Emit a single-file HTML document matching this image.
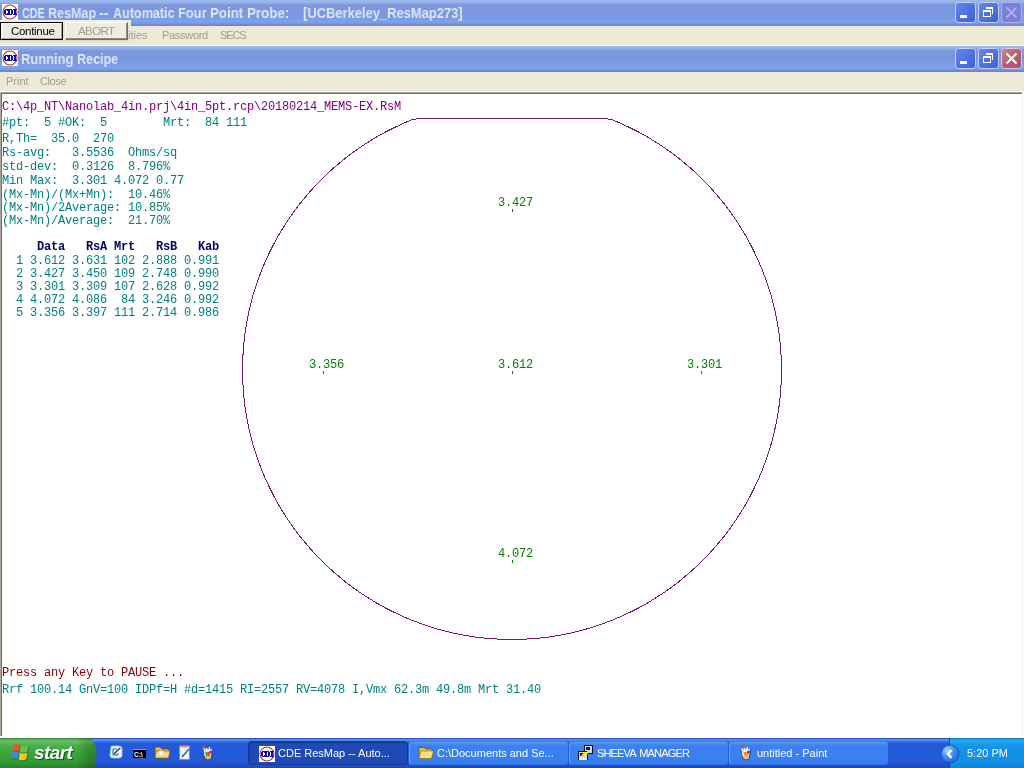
<!DOCTYPE html>
<html><head><meta charset="utf-8">
<style>
*{margin:0;padding:0;box-sizing:border-box}
html,body{width:1024px;height:768px;overflow:hidden;background:#fff;position:relative;font-family:"Liberation Sans",sans-serif}
.abs{position:absolute}
.tbar{position:absolute;left:0;width:1024px;height:26px;background:linear-gradient(to bottom,#9db6ec 0px,#9ab3ea 2px,#7b98de 5px,#7a96df 12px,#7b9be2 18px,#79a6e8 22px,#7c8fdd 24px,#6f7fd6 25px,#6f7fd6 26px)}
.ttl{position:absolute;will-change:transform;transform-origin:0 0;font-weight:bold;font-size:14px;color:#dce6f8;white-space:pre;line-height:14px}
.ico{position:absolute;width:16px;height:16px;background:#fff}
.menu{position:absolute;left:0;width:1024px;background:#ece9d8}
.mi{position:absolute;will-change:transform;font-size:11px;color:#a29e8e;white-space:pre;line-height:11px}
.mono{position:absolute;will-change:transform;font-family:"Liberation Mono",monospace;font-size:12px;letter-spacing:-0.2px;white-space:pre;line-height:12px}
.tbt{position:absolute;will-change:transform;top:747px;font-size:11px;line-height:13px;color:#fff;white-space:pre}
.btn{position:absolute;width:21px;height:21px;border-radius:3px;border:1px solid #cfdcf8}
</style></head><body>
<!-- main title bar -->
<div class="tbar" style="top:0"></div>
<svg class="abs" style="left:2px;top:4px" width="16" height="16"><rect width="16" height="16" fill="#fff"/><circle cx="8" cy="8" r="7" fill="none" stroke="#b83030" stroke-width="1.1"/><path fill="#0808b0" d="M2,6h2v4h-2zM3,5h3v1h-3zM3,10h3v1h-3zM5,5h1v2h-1zM5,9h1v2h-1zM6,5h2v6h-2zM8,5h2v1h-2zM8,10h2v1h-2zM9,6h2v4h-2zM11,5h4v1h-4zM11,10h4v1h-4zM12,6h2v4h-2z"/></svg>
<div class="ttl" style="left:22.00px;top:6px;transform:scaleX(0.7679)">CDE</div>
<div class="ttl" style="left:47.70px;top:6px;transform:scaleX(0.8961)">ResMap</div>
<div class="ttl" style="left:99.30px;top:6px;transform:scaleX(1.0375)">--</div>
<div class="ttl" style="left:113.30px;top:6px;transform:scaleX(0.9000)">Automatic</div>
<div class="ttl" style="left:178.08px;top:6px;transform:scaleX(0.9172)">Four</div>
<div class="ttl" style="left:210.05px;top:6px;transform:scaleX(0.9485)">Point</div>
<div class="ttl" style="left:246.85px;top:6px;transform:scaleX(0.9537)">Probe:</div>
<div class="ttl" style="left:303.48px;top:6px;transform:scaleX(0.9241)">[UCBerkeley_ResMap273]</div>
<svg class="abs" style="left:955px;top:2px" width="21" height="21"><defs><linearGradient id="bg2" x1="0" y1="0" x2="1" y2="1"><stop offset="0" stop-color="#6688ea"/><stop offset="1" stop-color="#3c5ed6"/></linearGradient></defs><rect x="0.5" y="0.5" width="20" height="20" rx="3" fill="url(#bg2)" stroke="#c3d3f8"/><rect x="5" y="13" width="7" height="3" fill="#fff"/></svg>
<svg class="abs" style="left:978px;top:2px" width="21" height="21"><rect x="0.5" y="0.5" width="20" height="20" rx="3" fill="url(#bg2)" stroke="#c3d3f8"/><path d="M8.5,6.5 H14.5 V11.5 M8,5.5 H15" stroke="#fff" fill="none" stroke-width="1"/><rect x="8" y="5" width="7" height="2" fill="#fff"/><rect x="14" y="5" width="1" height="7" fill="#fff"/><rect x="5" y="8" width="8" height="2" fill="#fff"/><rect x="5" y="8" width="1" height="7" fill="#fff"/><rect x="12" y="8" width="1" height="7" fill="#fff"/><rect x="5" y="14" width="8" height="1" fill="#fff"/></svg>
<svg class="abs" style="left:1001px;top:2px" width="21" height="21"><rect x="0.5" y="0.5" width="20" height="20" rx="3" fill="#7d80d6" stroke="#a9b4ee"/><path d="M5.5,5.5 L15.5,15.5 M15.5,5.5 L5.5,15.5" stroke="#b9bbf0" stroke-width="1.5"/></svg>
<!-- main menu -->
<div class="menu" style="top:26px;height:19px"></div>
<div class="abs" style="left:0;top:45px;width:1024px;height:1px;background:#fff"></div>
<div class="mi" style="left:162px;top:30px;letter-spacing:-0.3px">Password</div>
<div class="mi" style="left:220px;top:30px;letter-spacing:-1.1px">SECS</div>
<!-- button panel -->
<div class="abs" style="left:0;top:20px;width:131px;height:25px;background:#ebe8dc"></div>
<div class="abs" style="left:0;top:40px;width:129px;height:2px;background:#dedcd6"></div>
<div class="abs" style="left:0;top:20px;width:131px;height:2px;background:#eef0e6"></div>
<div class="abs" style="left:0;top:22px;width:63px;height:18px;border:1px solid #000;background:#efece0;box-shadow:inset 1px 1px #fff,inset -1px -1px #aca899"></div>
<div class="abs" style="left:65px;top:22px;width:63px;height:18px;background:#efece0;border-right:1px solid #716f64;border-bottom:1px solid #716f64;border-top:1px solid #fff;border-left:1px solid #fff;box-shadow:inset -1px -1px #8f8c80"></div>
<div class="mi" style="left:11px;top:26px;color:#000;font-size:11.5px;letter-spacing:-0.3px">Continue</div>
<div class="mi" style="left:78px;top:26px;font-size:11.5px;letter-spacing:-0.6px">ABORT</div>
<div class="mi" style="left:128px;top:30px">ities</div>
<!-- child title -->
<div class="tbar" style="top:46px"></div>
<svg class="abs" style="left:2px;top:50px" width="16" height="16"><rect width="16" height="16" fill="#fff"/><circle cx="8" cy="8" r="7" fill="none" stroke="#b83030" stroke-width="1.1"/><path fill="#0808b0" d="M2,6h2v4h-2zM3,5h3v1h-3zM3,10h3v1h-3zM5,5h1v2h-1zM5,9h1v2h-1zM6,5h2v6h-2zM8,5h2v1h-2zM8,10h2v1h-2zM9,6h2v4h-2zM11,5h4v1h-4zM11,10h4v1h-4zM12,6h2v4h-2z"/></svg>
<div class="ttl" style="left:21.08px;top:52px;transform:scaleX(0.9222)">Running</div>
<div class="ttl" style="left:76.70px;top:52px;transform:scaleX(0.9000)">Recipe</div>
<svg class="abs" style="left:955px;top:48px" width="21" height="21"><defs><linearGradient id="bg48" x1="0" y1="0" x2="1" y2="1"><stop offset="0" stop-color="#6688ea"/><stop offset="1" stop-color="#3c5ed6"/></linearGradient></defs><rect x="0.5" y="0.5" width="20" height="20" rx="3" fill="url(#bg48)" stroke="#c3d3f8"/><rect x="5" y="13" width="7" height="3" fill="#fff"/></svg>
<svg class="abs" style="left:978px;top:48px" width="21" height="21"><rect x="0.5" y="0.5" width="20" height="20" rx="3" fill="url(#bg48)" stroke="#c3d3f8"/><path d="M8.5,6.5 H14.5 V11.5 M8,5.5 H15" stroke="#fff" fill="none" stroke-width="1"/><rect x="8" y="5" width="7" height="2" fill="#fff"/><rect x="14" y="5" width="1" height="7" fill="#fff"/><rect x="5" y="8" width="8" height="2" fill="#fff"/><rect x="5" y="8" width="1" height="7" fill="#fff"/><rect x="12" y="8" width="1" height="7" fill="#fff"/><rect x="5" y="14" width="8" height="1" fill="#fff"/></svg>
<svg class="abs" style="left:1001px;top:48px" width="21" height="21"><defs><linearGradient id="rg" x1="0" y1="0" x2="1" y2="1"><stop offset="0" stop-color="#c88a8e"/><stop offset="0.5" stop-color="#b8606e"/><stop offset="1" stop-color="#a84e68"/></linearGradient></defs><rect x="0.5" y="0.5" width="20" height="20" rx="3" fill="url(#rg)" stroke="#d6c6f0"/><path d="M5.5,5.5 L15.5,15.5 M15.5,5.5 L5.5,15.5" stroke="#fff" stroke-width="2"/></svg>
<!-- child menu -->
<div class="menu" style="top:72px;height:19px"></div>
<div class="abs" style="left:0;top:91px;width:1024px;height:1px;background:#fff"></div>
<div class="mi" style="left:6px;top:76px">Print</div>
<div class="mi" style="left:40px;top:76px;letter-spacing:-0.4px">Close</div>
<!-- text area border -->
<div class="abs" style="left:0;top:92px;width:1022px;height:1px;background:#aca899"></div>
<div class="abs" style="left:1px;top:93px;width:1021px;height:1px;background:#716f64"></div>
<div class="abs" style="left:0;top:92px;width:1px;height:644px;background:#aca899"></div>
<div class="abs" style="left:1px;top:93px;width:1px;height:643px;background:#716f64"></div>
<div class="abs" style="left:1022px;top:94px;width:1px;height:642px;background:#efeee8"></div>
<svg class="abs" style="left:0;top:0" width="1024" height="738">
<polyline points="781.5,370.0 781.3,379.4 780.8,388.8 780.0,398.2 778.9,407.5 777.4,416.8 775.6,426.0 773.5,435.2 771.1,444.3 768.3,453.3 765.2,462.2 761.9,471.0 758.2,479.6 754.2,488.1 750.0,496.5 745.4,504.8 740.5,512.8 735.4,520.7 730.0,528.4 724.4,535.9 718.4,543.2 712.3,550.3 705.9,557.2 699.2,563.9 692.3,570.3 685.2,576.4 677.9,582.4 670.4,588.0 662.7,593.4 654.8,598.5 646.8,603.4 638.5,608.0 630.1,612.2 621.6,616.2 613.0,619.9 604.2,623.2 595.3,626.3 586.3,629.1 577.2,631.5 568.0,633.6 558.8,635.4 549.5,636.9 540.2,638.0 530.8,638.8 521.4,639.3 512.0,639.5 502.6,639.3 493.2,638.8 483.8,638.0 474.5,636.9 465.2,635.4 456.0,633.6 446.8,631.5 437.7,629.1 428.7,626.3 419.8,623.2 411.0,619.9 402.4,616.2 393.9,612.2 385.5,608.0 377.3,603.4 369.2,598.5 361.3,593.4 353.6,588.0 346.1,582.4 338.8,576.4 331.7,570.3 324.8,563.9 318.1,557.2 311.7,550.3 305.6,543.2 299.6,535.9 294.0,528.4 288.6,520.7 283.5,512.8 278.6,504.8 274.0,496.5 269.8,488.1 265.8,479.6 262.1,471.0 258.8,462.2 255.7,453.3 252.9,444.3 250.5,435.2 248.4,426.0 246.6,416.8 245.1,407.5 244.0,398.2 243.2,388.8 242.7,379.4 242.5,370.0 242.7,360.6 243.2,351.2 244.0,341.8 245.1,332.5 246.6,323.2 248.4,314.0 250.5,304.8 252.9,295.7 255.7,286.7 258.8,277.8 262.1,269.0 265.8,260.4 269.8,251.9 274.0,243.5 278.6,235.2 283.5,227.2 288.6,219.3 294.0,211.6 299.6,204.1 305.6,196.8 311.7,189.7 318.1,182.8 324.8,176.1 331.7,169.7 338.8,163.6 346.1,157.6 353.6,152.0 361.3,146.6 369.2,141.5 377.2,136.6 385.5,132.0 393.9,127.8 402.4,123.8 411.0,120.1 419.8,118 428.7,118 437.7,118 446.8,118 456.0,118 465.2,118 474.5,118 483.8,118 493.2,118 502.6,118 512.0,118 521.4,118 530.8,118 540.2,118 549.5,118 558.8,118 568.0,118 577.2,118 586.3,118 595.3,118 604.2,118 613.0,120.1 621.6,123.8 630.1,127.8 638.5,132.0 646.8,136.6 654.8,141.5 662.7,146.6 670.4,152.0 677.9,157.6 685.2,163.6 692.3,169.7 699.2,176.1 705.9,182.8 712.3,189.7 718.4,196.8 724.4,204.1 730.0,211.6 735.4,219.3 740.5,227.2 745.4,235.2 750.0,243.5 754.2,251.9 758.2,260.4 761.9,269.0 765.2,277.8 768.3,286.7 771.1,295.7 773.5,304.8 775.6,314.0 777.4,323.2 778.9,332.5 780.0,341.8 780.8,351.2 781.3,360.6 781.5,370.0" fill="none" stroke="#701a70" stroke-width="1" shape-rendering="crispEdges"/>
</svg>
<!-- text -->
<div class="mono" style="left:2px;top:101px;color:#800080">C:\4p_NT\Nanolab_4in.prj\4in_5pt.rcp\20180214_MEMS-EX.RsM</div>
<div class="mono" style="left:2px;top:117px;color:#008080">#pt:  5 #OK:  5        Mrt:  84 111</div>
<div class="mono" style="left:2px;top:133px;color:#008080">R,Th=  35.0  270</div>
<div class="mono" style="left:2px;top:147px;color:#008080">Rs-avg:   3.5536  Ohms/sq</div>
<div class="mono" style="left:2px;top:161px;color:#008080">std-dev:  0.3126  8.796%</div>
<div class="mono" style="left:2px;top:175px;color:#008080">Min Max:  3.301 4.072 0.77</div>
<div class="mono" style="left:2px;top:189px;color:#008080">(Mx-Mn)/(Mx+Mn):  10.46%</div>
<div class="mono" style="left:2px;top:202px;color:#008080">(Mx-Mn)/2Average: 10.85%</div>
<div class="mono" style="left:2px;top:215px;color:#008080">(Mx-Mn)/Average:  21.70%</div>
<div class="mono" style="left:2px;top:241px;color:#000060;font-weight:bold">     Data   RsA Mrt   RsB   Kab</div>
<div class="mono" style="left:2px;top:255px;color:#008080">  1 3.612 3.631 102 2.888 0.991</div>
<div class="mono" style="left:2px;top:268px;color:#008080">  2 3.427 3.450 109 2.748 0.990</div>
<div class="mono" style="left:2px;top:281px;color:#008080">  3 3.301 3.309 107 2.628 0.992</div>
<div class="mono" style="left:2px;top:294px;color:#008080">  4 4.072 4.086  84 3.246 0.992</div>
<div class="mono" style="left:2px;top:307px;color:#008080">  5 3.356 3.397 111 2.714 0.986</div>
<div class="mono" style="left:2px;top:667px;color:#800000">Press any Key to PAUSE ...</div>
<div class="mono" style="left:2px;top:684px;color:#008080">Rrf 100.14 GnV=100 IDPf=H #d=1415 RI=2557 RV=4078 I,Vmx 62.3m 49.8m Mrt 31.40</div>
<div class="mono" style="left:498px;top:197px;color:#008000">3.427</div>
<div class="mono" style="left:309px;top:359px;color:#008000">3.356</div>
<div class="mono" style="left:498px;top:359px;color:#008000">3.612</div>
<div class="mono" style="left:687px;top:359px;color:#008000">3.301</div>
<div class="mono" style="left:498px;top:548px;color:#008000">4.072</div>
<div class="abs" style="left:512px;top:209px;width:1px;height:3px;background:#008000"></div>
<div class="abs" style="left:323px;top:371px;width:1px;height:3px;background:#008000"></div>
<div class="abs" style="left:512px;top:371px;width:1px;height:3px;background:#008000"></div>
<div class="abs" style="left:701px;top:371px;width:1px;height:3px;background:#008000"></div>
<div class="abs" style="left:512px;top:560px;width:1px;height:3px;background:#008000"></div>
<!-- taskbar -->
<div class="abs" style="left:0;top:736px;width:1024px;height:2px;background:#fff"></div>
<div class="abs" style="left:0;top:738px;width:1024px;height:30px;background:linear-gradient(to bottom,#2a50c4 0,#2a50c4 1px,#4a90f0 1px,#4588ee 3px,#2e68e0 4px,#2459d9 6px,#245ad9 22px,#2252cf 26px,#1e46b8 30px)"></div>
<svg class="abs" style="left:0;top:738px" width="100" height="30"><defs><linearGradient id="sg" x1="0" y1="0" x2="0" y2="1"><stop offset="0" stop-color="#2f7d32"/><stop offset="0.04" stop-color="#4aa84a"/><stop offset="0.1" stop-color="#6cc06c"/><stop offset="0.25" stop-color="#4cb04c"/><stop offset="0.5" stop-color="#3aa63a"/><stop offset="0.8" stop-color="#339a35"/><stop offset="1" stop-color="#2c8030"/></linearGradient><linearGradient id="sg2" x1="0" y1="0" x2="1" y2="0"><stop offset="0.8" stop-color="#000" stop-opacity="0"/><stop offset="1" stop-color="#0a400a" stop-opacity="0.35"/></linearGradient></defs><path d="M0,0 H91 Q96.5,7 96.5,15 Q96.5,24 94,30 H0 Z" fill="url(#sg)"/><path d="M0,0 H91 Q96.5,7 96.5,15 Q96.5,24 94,30 H0 Z" fill="url(#sg2)"/></svg>
<svg class="abs" style="left:10px;top:743px" width="21" height="19"><g transform="translate(1,1) scale(1.08)" opacity="0.35"><path d="M3,2 Q6,0 9,2 L8,8 Q5,6 2,8 Z M10,2 Q13,4 17,2 L16,8 Q12,10 9,8 Z M2,9 Q5,7 8,9 L7,15 Q4,13 1,15 Z M9,9 Q12,11 16,9 L15,15 Q11,17 8,15 Z" fill="#0a3a0a"/></g><g transform="scale(1.08)"><path d="M3,2 Q6,0 9,2 L8,8 Q5,6 2,8 Z" fill="#e8562a"/><path d="M10,2 Q13,4 17,2 L16,8 Q12,10 9,8 Z" fill="#6cc43c"/><path d="M2,9 Q5,7 8,9 L7,15 Q4,13 1,15 Z" fill="#4a80e8"/><path d="M9,9 Q12,11 16,9 L15,15 Q11,17 8,15 Z" fill="#f8c828"/></g></svg>
<div class="abs" style="will-change:transform;left:34px;top:742px;font-size:19px;line-height:22px;letter-spacing:-0.6px;font-weight:bold;font-style:italic;color:#fff;text-shadow:1px 1px 1px rgba(0,40,0,.75)">start</div>
<!-- quick launch -->
<svg class="abs" style="left:109px;top:745px" width="16" height="14"><path d="M2,3 Q1,1 4,1 L10,1 Q13,1 13,4 L13,10 Q13,13 10,13 L4,13 Q1,13 1,10 Z" fill="#e6f6ff" stroke="#9ad4f8" stroke-width="0.8"/><path d="M4,4 H8 M4,4 V10 H9 V8" stroke="#3a5878" stroke-width="1" fill="none"/><path d="M5,9 L11,3" stroke="#20304a" stroke-width="1.3"/><path d="M11,3 L14,4" stroke="#c0a080" stroke-width="1.2"/></svg>
<svg class="abs" style="left:133px;top:749px" width="13" height="9"><rect width="13" height="9" fill="#000"/><rect width="13" height="1" fill="#7a9ad8"/><text x="1" y="7.5" font-family="Liberation Sans" font-weight="bold" font-size="6.5" fill="#fff">C:\</text></svg>
<svg class="abs" style="left:154px;top:745px" width="17" height="14"><path d="M1,2 H6 L8,4 H15 V13 H1 Z" fill="#e0b840" stroke="#6a5010" stroke-width="0.8"/><path d="M2.5,6 H16 L14.5,13 H1 Z" fill="#f6da78" stroke="#7a5a10" stroke-width="0.6"/><circle cx="7" cy="8" r="2.6" fill="#eef6ff" opacity=".85"/></svg>
<svg class="abs" style="left:179px;top:745px" width="12" height="15"><rect x="0.5" y="1.5" width="10" height="13" fill="#eef6fa" stroke="#6a8ab8" stroke-width="0.8"/><rect x="0.5" y="0.5" width="10" height="2" fill="#d8a070"/><path d="M3,12 L10,4" stroke="#3a5aa8" stroke-width="1.5"/></svg>
<svg class="abs" style="left:201px;top:744px" width="14" height="17"><path d="M2,5 L4,15 Q7,17 10,15 L12,5" fill="#b8d4ee" stroke="#1a2a6a" stroke-width="0.8"/><path d="M4,8 L5,15 L9,15 L10,8 Z" fill="#e0c050"/><path d="M5.5,4 L6,10 M8.5,3 L8,10" stroke="#fff" stroke-width="1.4"/><rect x="4.5" y="8" width="2" height="4" fill="#40a040"/><rect x="6.5" y="8" width="2" height="4" fill="#d04040"/><circle cx="9.5" cy="8" r="1.5" fill="#c03030"/><circle cx="3" cy="3" r="1.6" fill="#a06040"/><path d="M3,4 L4,12" stroke="#e0f0ff" stroke-width="1.2"/></svg>
<!-- task buttons -->
<div class="abs" style="left:248px;top:741px;width:160px;height:24px;border-radius:3px;background:#1e4ab8;border:1px solid #173a96;box-shadow:inset 1px 1px 1px #153a90"></div>
<div class="abs" style="left:409px;top:742px;width:159px;height:23px;border-radius:3px;background:linear-gradient(to bottom,#4a90f8 0,#3c81f3 3px,#3a7ff2 19px,#2f6fe0 23px);border-left:1px solid #62a4fa;border-top:1px solid #5e9cf8"></div>
<div class="abs" style="left:569px;top:742px;width:159px;height:23px;border-radius:3px;background:linear-gradient(to bottom,#4a90f8 0,#3c81f3 3px,#3a7ff2 19px,#2f6fe0 23px);border-left:1px solid #62a4fa;border-top:1px solid #5e9cf8"></div>
<div class="abs" style="left:729px;top:742px;width:159px;height:23px;border-radius:3px;background:linear-gradient(to bottom,#4a90f8 0,#3c81f3 3px,#3a7ff2 19px,#2f6fe0 23px);border-left:1px solid #62a4fa;border-top:1px solid #5e9cf8"></div>
<svg class="abs" style="left:259px;top:746px" width="16" height="16"><rect width="16" height="16" fill="#fff"/><circle cx="8" cy="8" r="7" fill="none" stroke="#b83030" stroke-width="1.1"/><path fill="#0808b0" d="M2,6h2v4h-2zM3,5h3v1h-3zM3,10h3v1h-3zM5,5h1v2h-1zM5,9h1v2h-1zM6,5h2v6h-2zM8,5h2v1h-2zM8,10h2v1h-2zM9,6h2v4h-2zM11,5h4v1h-4zM11,10h4v1h-4zM12,6h2v4h-2z"/></svg>
<div class="tbt" style="left:278px">CDE ResMap -- Auto...</div>
<svg class="abs" style="left:418px;top:746px" width="16" height="13"><path d="M1,1.5 H6 L8,3 H14 V12 H1 Z" fill="#e8c040" stroke="#6a5010" stroke-width="0.8"/><path d="M3,5 H15.5 L13.5,12.5 H1 Z" fill="#fbe27e" stroke="#8a6a10" stroke-width="0.6"/></svg>
<div class="tbt" style="left:437px">C:\Documents and Se...</div>
<svg class="abs" style="left:577px;top:744px" width="18" height="18"><rect x="7.5" y="1.5" width="8" height="8" fill="#d8d8e0" stroke="#000820" stroke-width="1"/><rect x="9" y="3" width="4" height="3" fill="#10186a"/><rect x="1.5" y="7.5" width="9" height="8" fill="#d8d8e0" stroke="#000820" stroke-width="1"/><rect x="3" y="9" width="4" height="3" fill="#10186a"/><rect x="2" y="14" width="8" height="2" fill="#f0f0f0"/><path d="M5,12 L8,9 L9,10 L12,7" stroke="#f8e820" stroke-width="2" fill="none"/></svg>
<div class="tbt" style="left:597px;letter-spacing:-0.85px;word-spacing:2px">SHEEVA MANAGER</div>
<svg class="abs" style="left:739px;top:744px" width="14" height="17"><path d="M2,5 L4,15 Q7,17 10,15 L12,5" fill="#b8d4ee" stroke="#1a2a6a" stroke-width="0.8"/><path d="M4,8 L5,15 L9,15 L10,8 Z" fill="#f0c050"/><path d="M5.5,4 L6,10 M8.5,3 L8,10" stroke="#fff" stroke-width="1.4"/><rect x="5" y="8" width="4" height="3" fill="#f09040"/><circle cx="9.5" cy="8" r="1.5" fill="#c03030"/><circle cx="3" cy="3" r="1.8" fill="#c04850"/><path d="M3,4 L4,12" stroke="#e0f0ff" stroke-width="1.2"/></svg>
<div class="tbt" style="left:757px">untitled - Paint</div>
<!-- tray -->
<div class="abs" style="left:949px;top:738px;width:75px;height:30px;border-left:1px solid #1042af;background:linear-gradient(to bottom,#1a7ed6 0,#1a7ed6 1px,#26b2f6 2px,#1aa0ec 4px,#1491e8 10px,#1390e6 24px,#1280d8 30px)"></div>
<svg class="abs" style="left:940px;top:744px" width="20" height="20"><defs><radialGradient id="chev" cx="0.35" cy="0.3" r="0.8"><stop offset="0" stop-color="#a8d8ff"/><stop offset="0.5" stop-color="#3c8cf0"/><stop offset="1" stop-color="#1c5cd0"/></radialGradient></defs><circle cx="10" cy="10" r="9" fill="url(#chev)" stroke="#1a48b0" stroke-width="0.8"/><path d="M11.5,6 L8,10 L11.5,14" stroke="#fff" stroke-width="2.2" fill="none"/></svg>
<div class="tbt" style="left:967px;color:#fff">5:20 PM</div>
</body></html>
